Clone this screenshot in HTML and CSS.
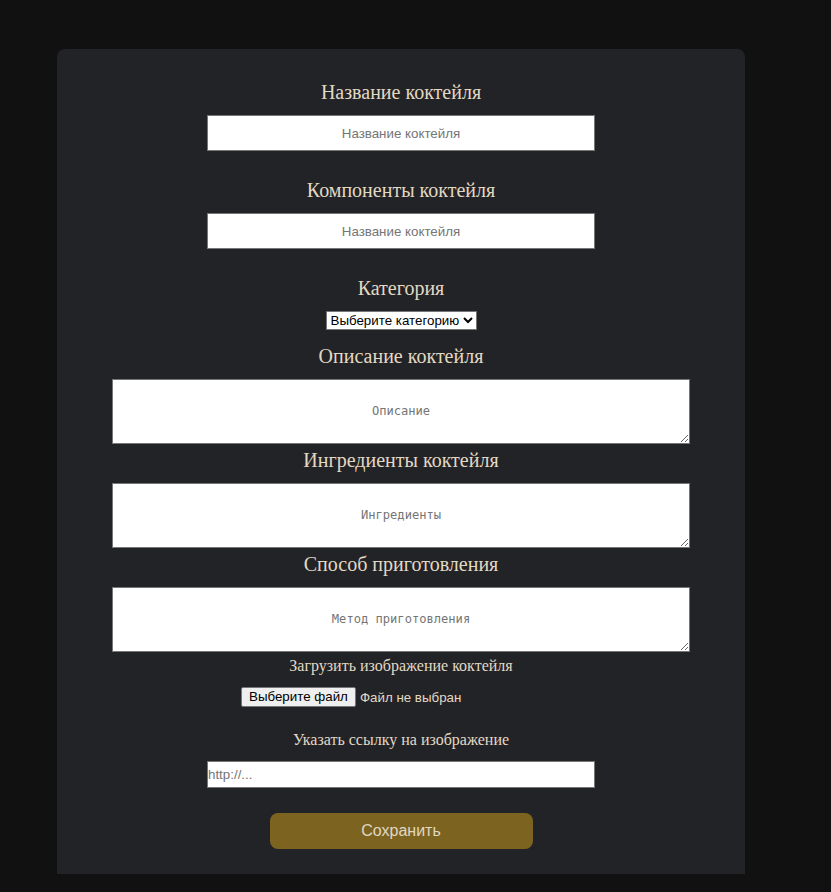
FILE: index.html
```html
<!DOCTYPE html>
<html lang="ru">
<head>
<meta charset="utf-8">
<title>Коктейль</title>
<link rel="stylesheet" href="styles.css">
</head>
<body>
<form class="card">
  <div class="label">Название коктейля</div>
  <input class="text-field" type="text" placeholder="Название коктейля">
  <div class="label">Компоненты коктейля</div>
  <input class="text-field" type="text" placeholder="Название коктейля">
  <div class="label">Категория</div>
  <select class="select">
    <option>Выберите категорию</option>
  </select>
  <div class="label">Описание коктейля</div>
  <textarea class="area" placeholder="Описание"></textarea>
  <div class="label">Ингредиенты коктейля</div>
  <textarea class="area" placeholder="Ингредиенты"></textarea>
  <div class="label">Способ приготовления</div>
  <textarea class="area" placeholder="Метод приготовления"></textarea>
  <div class="label small">Загрузить изображение коктейля</div>
  <label class="file">
    <input class="file-input" type="file">
    <span class="file-btn">Выберите файл</span>
    <span class="file-name">Файл не выбран</span>
  </label>
  <div class="label small">Указать ссылку на изображение</div>
  <input class="url" type="text" placeholder="http://...">
  <button class="save" type="button">Сохранить</button>
</form>
</body>
</html>
```
FILE: styles.css
```css
html, body {
  margin: 0;
  padding: 0;
  background: #111111;
}
body {
  padding: 49px 0 18px 57px;
}
.card {
  width: 688px;
  box-sizing: border-box;
  background: #222327;
  border-radius: 8px 8px 0 0;
  padding: 32px 0 25px;
  display: flex;
  flex-direction: column;
  align-items: center;
}
.label {
  font-family: "Liberation Serif", "Times New Roman", serif;
  font-size: 20px;
  line-height: 23px;
  color: #e3d9c3;
  margin-bottom: 11px;
}
.label.small {
  font-size: 16px;
  line-height: 18px;
  margin-bottom: 12px;
}
.text-field {
  width: 388px;
  height: 36px;
  box-sizing: border-box;
  border: 1px solid #767676;
  background: #fff;
  text-align: center;
  font-family: "Liberation Sans", Arial, sans-serif;
  font-size: 13.33px;
  margin: 0 0 28px;
  padding: 0 10px;
}
.text-field::placeholder, .url::placeholder {
  color: #757575;
}
.select {
  font-family: "Liberation Sans", Arial, sans-serif;
  font-size: 13.33px;
  height: 19px;
  margin: 0 0 15px;
  border: 1px solid #767676;
  background: #fff;
  color: #000;
  padding: 0;
}
.area {
  width: 578px;
  height: 65px;
  box-sizing: border-box;
  border: 1px solid #767676;
  background: #fff;
  font-family: "DejaVu Sans Mono", "Liberation Mono", monospace;
  font-size: 12.1px;
  text-align: center;
  padding: 24px 2px 2px;
  margin: 0 0 5px;
  resize: vertical;
}
.area::placeholder {
  color: #757575;
}
.file {
  width: 320px;
  display: flex;
  align-items: center;
  font-family: "Liberation Sans", Arial, sans-serif;
  font-size: 13.33px;
  color: #e3d9c3;
  margin: 0 0 24px;
  cursor: pointer;
}
.file-input {
  position: absolute;
  width: 1px;
  height: 1px;
  opacity: 0;
  overflow: hidden;
}
.file-btn {
  display: inline-block;
  box-sizing: border-box;
  height: 20px;
  line-height: 16px;
  padding: 1px 7px;
  background: #efefef;
  color: #000;
  border: 1px solid #767676;
  border-radius: 2px;
}
.file-name {
  margin-left: 4px;
}
.url {
  width: 388px;
  height: 27px;
  box-sizing: border-box;
  border: 1px solid #767676;
  background: #fff;
  font-family: "Liberation Sans", Arial, sans-serif;
  font-size: 13.33px;
  padding: 0;
  margin: 0 0 25px;
}
.save {
  width: 263px;
  height: 36px;
  border: none;
  border-radius: 8px;
  background: #7c6320;
  color: #e0d8c2;
  font-family: "Liberation Sans", Arial, sans-serif;
  font-size: 16px;
  cursor: pointer;
}
```
